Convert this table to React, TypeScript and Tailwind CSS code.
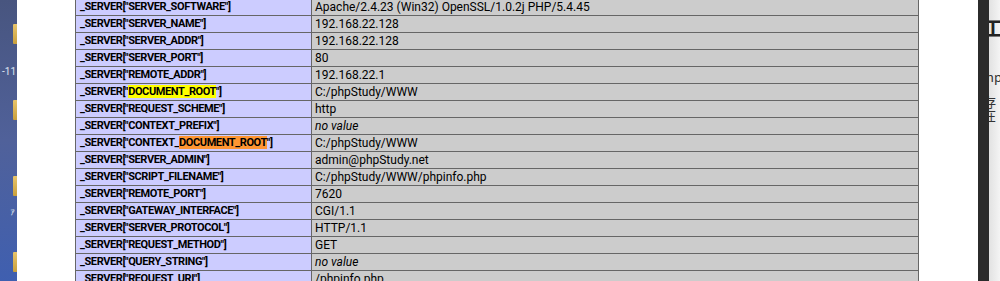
import React from 'react';

const rows: { key: string; value: string; mark?: 'yellow' | 'orange'; prefix?: string; italic?: boolean }[] = [
    { key: 'SERVER_SOFTWARE', value: 'Apache/2.4.23 (Win32) OpenSSL/1.0.2j PHP/5.4.45' },
    { key: 'SERVER_NAME', value: '192.168.22.128' },
    { key: 'SERVER_ADDR', value: '192.168.22.128' },
    { key: 'SERVER_PORT', value: '80' },
    { key: 'REMOTE_ADDR', value: '192.168.22.1' },
    { key: 'DOCUMENT_ROOT', value: 'C:/phpStudy/WWW', mark: 'yellow' },
    { key: 'REQUEST_SCHEME', value: 'http' },
    { key: 'CONTEXT_PREFIX', value: 'no value', italic: true },
    { key: 'DOCUMENT_ROOT', prefix: 'CONTEXT_', value: 'C:/phpStudy/WWW', mark: 'orange' },
    { key: 'SERVER_ADMIN', value: 'admin@phpStudy.net' },
    { key: 'SCRIPT_FILENAME', value: 'C:/phpStudy/WWW/phpinfo.php' },
    { key: 'REMOTE_PORT', value: '7620' },
    { key: 'GATEWAY_INTERFACE', value: 'CGI/1.1' },
    { key: 'SERVER_PROTOCOL', value: 'HTTP/1.1' },
    { key: 'REQUEST_METHOD', value: 'GET' },
    { key: 'QUERY_STRING', value: 'no value', italic: true },
    { key: 'REQUEST_URI', value: '/phpinfo.php' },
];

const Folder = () => <div className="w-[4px] h-[20px] bg-gradient-to-b from-[#e8c46a] to-[#c9a03c] rounded-l-[1px]" />;

export default function App() {
    return (
        <div className="flex h-[281px] w-[1000px] overflow-hidden bg-white font-['Roboto',sans-serif] text-[12px] text-black">
            {/* desktop behind the window */}
            <div className="w-[17px] h-full bg-gradient-to-b from-[#48557f] via-[#50619a] to-[#3f5fb0] flex flex-col items-end pt-[24px] gap-[56px] text-[#dfe4f0] text-[10px] relative">
                <Folder />
                <Folder />
                <Folder />
                <Folder />
                <span className="absolute left-[2px] top-[64px]">-11</span>
                <span className="absolute left-[10px] top-[204px]">ｧ</span>
            </div>

            <div className="flex-1 pl-[58px] overflow-hidden">
                <table className="table-fixed border-collapse -mt-[2px] w-[844px]">
                    <colgroup>
                        <col className="w-[236px]" />
                        <col />
                    </colgroup>
                    <tbody>
                        {rows.map((r, i) => (
                            <tr key={i} className="h-[17px]">
                                <td className="bg-[#ccccff] border border-[#666] pl-[4px] py-0 text-[11px] font-bold tracking-[-0.4px] leading-[16px] whitespace-nowrap overflow-hidden">
                                    _SERVER["{r.prefix}
                                    {r.mark ? (
                                        <span className={r.mark === 'yellow' ? 'bg-[#ffff00]' : 'bg-[#ff9632]'}>{r.key}</span>
                                    ) : (
                                        r.key
                                    )}
                                    "]
                                </td>
                                <td className={`bg-[#cccccc] border border-[#666] pl-[3px] py-0 leading-[16px] whitespace-nowrap ${r.italic ? 'italic' : ''}`}>
                                    {r.value}
                                </td>
                            </tr>
                        ))}
                    </tbody>
                </table>
            </div>

            {/* neighbouring window edge */}
            <div className="w-[11px] h-full bg-[#2b2b2b]" />
            <div className="w-[11px] h-full bg-gradient-to-r from-[#e2e2e2] to-[#f4f4f4] overflow-hidden relative text-[13px] text-[#333] font-['Noto_Sans_CJK_SC',sans-serif]">
                <span className="absolute left-[-6px] top-[18px] text-[20px] font-bold leading-none text-[#222]">工</span>
                <span className="absolute left-[-3px] top-[70px] leading-none">hp</span>
                <span className="absolute left-[-6px] top-[95px] leading-none">存在</span>
            </div>
        </div>
    );
}
